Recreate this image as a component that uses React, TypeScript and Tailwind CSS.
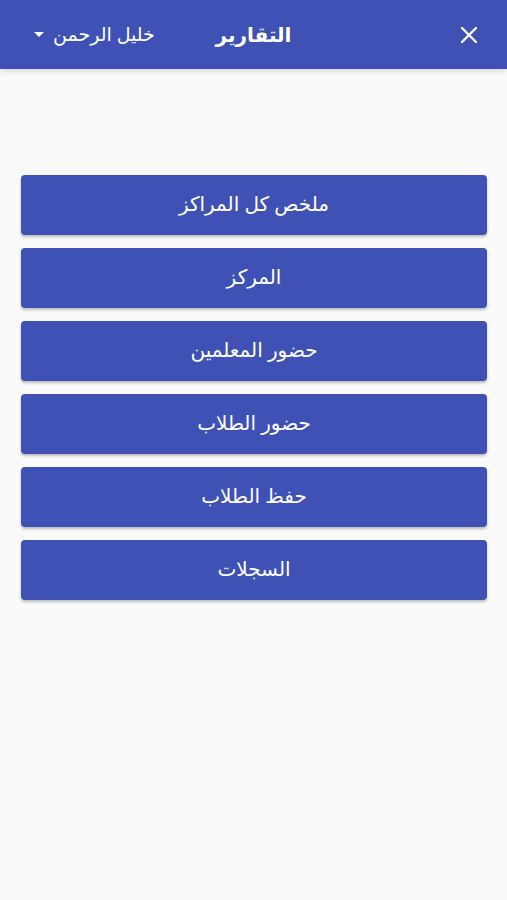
import { X } from 'lucide-react';

const reports = ['ملخص كل المراكز', 'المركز', 'حضور المعلمين', 'حضور الطلاب', 'حفظ الطلاب', 'السجلات'];

export default function App() {
  return (
    <div dir="rtl" className="min-h-[900px] bg-[#fafafa] font-['Noto_Sans','DejaVu_Sans',sans-serif]">
      <header className="grid h-[69px] grid-cols-3 items-center bg-[#3f51b5] px-6 text-white shadow-md">
        <div className="flex justify-start">
          <X className="h-7 w-7" strokeWidth={2} />
        </div>
        <h1 className="text-center text-[20px] font-bold">التقارير</h1>
        <div className="flex items-center justify-end gap-[9px] pl-[10px]">
          <span className="whitespace-nowrap text-[19px]">خليل الرحمن</span>
          <span className="h-0 w-0 border-x-[5px] border-t-[5px] border-x-transparent border-t-white" />
        </div>
      </header>

      <main className="flex flex-col gap-[13px] pl-[21px] pr-5 pt-[106px]">
        {reports.map((label) => (
          <button
            key={label}
            className="flex h-[60px] items-center justify-center rounded bg-[#3f51b5] pb-0.5 text-[20px] text-white shadow-[0_2px_3px_rgba(0,0,0,0.25)]"
          >
            {label}
          </button>
        ))}
      </main>
    </div>
  );
}
